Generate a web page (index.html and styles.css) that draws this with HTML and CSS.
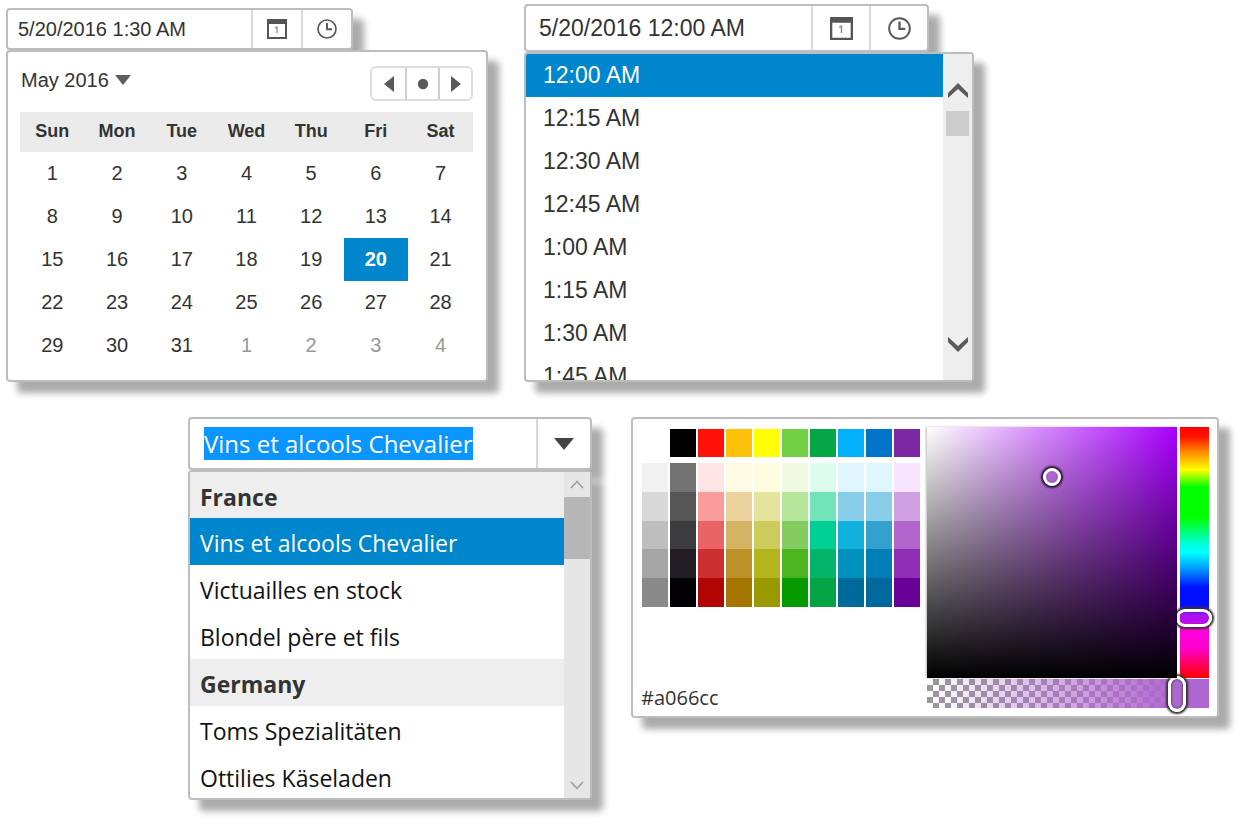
FILE: index.html
```html
<!DOCTYPE html>
<html lang="en">
<head>
<meta charset="utf-8">
<title>Input widgets</title>
<link rel="stylesheet" href="styles.css">
</head>
<body>
<main class="page">
  <div class="row">
    <section class="widget calendar-widget" aria-label="Date picker">
      <div class="field date-field">
        <input class="field-input" type="text" value="5/20/2016 1:30 AM" aria-label="Date and time">
        <button class="field-button" type="button" aria-label="Open calendar">
          <svg class="icon" viewBox="0 0 20 20"><path fill="#555" fill-rule="evenodd" d="M0 0h20v20H0zM2 5v13h16V5z"/><path d="M8 9l2-1v6" fill="none" stroke="#888" stroke-width="1.2"/></svg>
        </button>
        <button class="field-button" type="button" aria-label="Open time list">
          <svg class="icon" viewBox="0 0 20 20"><circle cx="10" cy="10" r="9" fill="none" stroke="#5a5a5a" stroke-width="1.7"/><path d="M10 4v6.300h5" fill="none" stroke="#5a5a5a" stroke-width="2"/></svg>
        </button>
      </div>
      <div class="popup calendar">
        <div class="calendar-bar">
          <button class="month" type="button">May 2016 <svg class="month-arrow" viewBox="0 0 16 10"><path d="M0 0h16L8 10z" fill="#5f5f5f"/></svg></button>
          <div class="pager">
            <button type="button" aria-label="Previous month"><svg viewBox="0 0 16 16"><path d="M13 0v16L3 8z"/></svg></button>
            <button type="button" aria-label="Today"><svg viewBox="0 0 16 16"><circle cx="8" cy="8" r="5.200"/></svg></button>
            <button type="button" aria-label="Next month"><svg viewBox="0 0 16 16"><path d="M3 0v16l10-8z"/></svg></button>
          </div>
        </div>
        <table class="days">
          <thead><tr><th>Sun</th><th>Mon</th><th>Tue</th><th>Wed</th><th>Thu</th><th>Fri</th><th>Sat</th></tr></thead>
          <tbody>
            <tr><td>1</td><td>2</td><td>3</td><td>4</td><td>5</td><td>6</td><td>7</td></tr>
            <tr><td>8</td><td>9</td><td>10</td><td>11</td><td>12</td><td>13</td><td>14</td></tr>
            <tr><td>15</td><td>16</td><td>17</td><td>18</td><td>19</td><td class="selected">20</td><td>21</td></tr>
            <tr><td>22</td><td>23</td><td>24</td><td>25</td><td>26</td><td>27</td><td>28</td></tr>
            <tr><td>29</td><td>30</td><td>31</td><td class="other">1</td><td class="other">2</td><td class="other">3</td><td class="other">4</td></tr>
          </tbody>
        </table>
      </div>
    </section>

    <section class="widget time-widget" aria-label="Time picker">
      <div class="field time-field">
        <input class="field-input" type="text" value="5/20/2016 12:00 AM" aria-label="Date and time">
        <button class="field-button" type="button" aria-label="Open calendar">
          <svg class="icon" viewBox="0 0 20 20"><path fill="#555" fill-rule="evenodd" d="M0 0h20v20H0zM2 5v13h16V5z"/><path d="M8 9l2-1v6" fill="none" stroke="#888" stroke-width="1.2"/></svg>
        </button>
        <button class="field-button" type="button" aria-label="Open time list">
          <svg class="icon" viewBox="0 0 20 20"><circle cx="10" cy="10" r="9" fill="none" stroke="#5a5a5a" stroke-width="1.7"/><path d="M10 4v6.300h5" fill="none" stroke="#5a5a5a" stroke-width="2"/></svg>
        </button>
      </div>
      <div class="popup list-popup times">
        <ul class="options" role="listbox" aria-label="Times">
          <li role="option" class="active" aria-selected="true">12:00 AM</li>
          <li role="option">12:15 AM</li>
          <li role="option">12:30 AM</li>
          <li role="option">12:45 AM</li>
          <li role="option">1:00 AM</li>
          <li role="option">1:15 AM</li>
          <li role="option">1:30 AM</li>
          <li role="option">1:45 AM</li>
        </ul>
        <div class="scrollbar">
          <button type="button" aria-label="Scroll up"><svg viewBox="0 0 20 16"><path d="M0 11v5L10 7l10 9v-5L10 1z"/></svg></button>
          <span class="thumb"></span>
          <button class="down" type="button" aria-label="Scroll down"><svg viewBox="0 0 20 16"><path d="M0 0v5l10 10 10-10V0L10 9z"/></svg></button>
        </div>
      </div>
    </section>
  </div>

  <div class="row lower">
    <section class="widget combo-widget" aria-label="Customer">
      <div class="field combo-field">
        <input class="field-input" id="customer" type="text" value="Vins et alcools Chevalier" aria-label="Customer" autofocus>
        <button class="field-button" type="button" aria-label="Open list">
          <svg class="combo-arrow" viewBox="0 0 20 12"><path d="M0 0h20L10 12z" fill="#444"/></svg>
        </button>
      </div>
      <div class="popup list-popup customers">
        <ul class="options" role="listbox" aria-label="Customers">
          <li class="group">France</li>
          <li role="option" class="active" aria-selected="true">Vins et alcools Chevalier</li>
          <li role="option">Victuailles en stock</li>
          <li role="option">Blondel père et fils</li>
          <li class="group">Germany</li>
          <li role="option">Toms Spezialitäten</li>
          <li role="option">Ottilies Käseladen</li>
        </ul>
        <div class="scrollbar thin">
          <button type="button" aria-label="Scroll up"><svg viewBox="0 0 14 9"><path d="M1 8l6-6.500L13 8"/></svg></button>
          <span class="thumb"></span>
          <button class="down" type="button" aria-label="Scroll down"><svg viewBox="0 0 14 9"><path d="M1 1l6 6.500L13 1"/></svg></button>
        </div>
      </div>
    </section>

    <section class="popup color-picker" aria-label="Color picker">
      <div class="palette">
        <div class="swatches base" id="base"></div>
        <div class="swatches shades" id="shades"></div>
        <input class="hex" type="text" value="#a066cc" aria-label="Color value">
      </div>
      <div class="mixer">
        <div class="plane"><span class="plane-handle"></span></div>
        <input class="hue" type="range" min="0" max="1000" value="781" aria-label="Hue">
        <input class="alpha" type="range" min="0" max="1000" value="913" aria-label="Opacity">
      </div>
    </section>
  </div>
</main>
<script src="script.js"></script>
</body>
</html>
```
FILE: styles.css
```css
* { box-sizing: border-box; }

body {
  margin: 0;
  background: #fff;
  color: #333;
  font-family: "Liberation Sans", Arial, sans-serif;
  font-size: 20px;
}

button, input {
  margin: 0;
  padding: 0;
  border: 0;
  background: none;
  color: inherit;
  font: inherit;
  outline: none;
}

.page {
  min-height: 100vh;
  padding: 4px 6px 24px;
}

.row {
  display: flex;
  align-items: flex-start;
  gap: 36px;
}

.lower {
  gap: 39px;
  margin-top: 35px;
  padding-left: 182px;
}

.calendar-widget { flex: 0 1 482px; margin-top: 4px; }
.time-widget { flex: 0 1 450px; }
.combo-widget { flex: 0 1 404px; font-family: "Open Sans", "Segoe UI", sans-serif; }

/* Fields */
.field {
  display: flex;
  border: 2px solid #bdbdbd;
  border-radius: 4px;
  background: #fff;
  box-shadow: 11px 11px 7px #ababab;
}

.field-input { flex: 1; min-width: 0; }

.field-button {
  display: flex;
  align-items: center;
  justify-content: center;
  border-left: 2px solid #d9d9d9;
}

.date-field { width: 72%; height: 42px; }
.date-field .field-input { padding-left: 10px; }
.date-field .field-button { width: 50px; }
.date-field .icon { width: 20px; height: 20px; }

.time-field { width: 90%; height: 48px; font-size: 23px; }
.time-field .field-input { padding-left: 13px; }
.time-field .field-button { width: 58px; }
.time-field .icon { width: 23px; height: 23px; }

.combo-field { height: 53px; font-size: 24px; }
.combo-field .field-input { padding-left: 14px; }
.combo-field .field-button { width: 54px; }
.combo-field .field-input::selection { background: #0a95ff; color: #fff; }
.combo-arrow { width: 20px; height: 12px; }

/* Popups */
.popup {
  position: relative;
  border: 2px solid #bdbdbd;
  border-radius: 4px;
  background: #fff;
  box-shadow: 11px 11px 7px #ababab;
}

/* Calendar */
.calendar { padding: 14px 13px 13px 12px; }

.calendar-bar {
  display: flex;
  justify-content: space-between;
  padding-bottom: 11px;
}

.month {
  display: flex;
  align-items: center;
  gap: 6px;
  height: 28px;
  padding-left: 1px;
}
.month-arrow { width: 16px; height: 10px; }

.pager {
  display: flex;
  border: 2px solid #dedede;
  border-radius: 6px;
}
.pager button {
  display: flex;
  align-items: center;
  justify-content: center;
  width: 33px;
  height: 31px;
}
.pager button + button { border-left: 2px solid #cfcfcf; }
.pager svg { width: 16px; height: 16px; fill: #5a5a5a; }

.days {
  width: 100%;
  border-collapse: collapse;
  table-layout: fixed;
  text-align: center;
}
.days th {
  height: 40px;
  padding: 0 0 2px;
  background: #ebebeb;
  font-size: 18px;
}
.days td { height: 43px; padding: 0; }
.days .selected { background: #0086cc; color: #fff; font-weight: bold; }
.days .other { color: #999; }

/* Lists */
.list-popup { display: flex; overflow: hidden; }

.options {
  flex: 1;
  margin: 0;
  padding: 0;
  list-style: none;
}
.options .active { background: #0086cc; color: #fff; }

.times { height: 330px; font-size: 23px; }
.times li { height: 43px; padding-left: 17px; line-height: 43px; }

.customers { height: 330px; color: #111; font-size: 23px; }
.customers li { height: 47px; padding-left: 10px; line-height: 50px; }
.customers .group { background: #eee; color: #333; font-weight: bold; }
.customers .group:first-child { height: 46px; }

.scrollbar {
  display: flex;
  flex-direction: column;
  width: 29px;
  padding: 28px 3px 27px 3px;
  background: #eee;
}
.scrollbar button {
  display: flex;
  align-items: center;
  justify-content: center;
  height: 16px;
}
.scrollbar svg { width: 20px; height: 16px; fill: #5a5a5a; }
.scrollbar .down { margin-top: auto; }
.scrollbar .thumb { height: 25px; margin-top: 13px; background: #ccc; }

.scrollbar.thin { width: 26px; padding: 0; background: #e6e6e6; }
.scrollbar.thin button { height: 25px; }
.scrollbar.thin svg { width: 14px; height: 9px; fill: none; stroke: #999; stroke-width: 1.5; }
.scrollbar.thin .thumb { height: 62px; margin-top: 0; background: #b6b6b6; }

/* Color picker */
.color-picker {
  display: flex;
  flex: 0 1 588px;
  gap: 7px;
  height: 301px;
  padding: 8px;
}

.palette {
  display: flex;
  flex: 1;
  flex-direction: column;
  padding-top: 2px;
}
.swatches {
  display: grid;
  grid-template-columns: repeat(10, 26px);
  column-gap: 2px;
  padding-left: 1px;
}
.base { height: 28px; }
.shades { height: 144px; margin-top: 6px; }

.hex {
  width: 120px;
  height: 22px;
  margin-top: auto;
  font-family: "Open Sans", "Segoe UI", sans-serif;
  font-size: 20px;
}

.mixer {
  display: grid;
  grid-template-columns: 250px 29px;
  grid-template-rows: 251px 29px;
  gap: 1px 3px;
}

.plane {
  position: relative;
  background: linear-gradient(to top, #000, transparent), linear-gradient(to right, #fff, #a800ff);
  box-shadow: -1px 0 2px #bbb;
}
.plane-handle {
  position: absolute;
  top: 20%;
  left: 50%;
  width: 18px;
  height: 18px;
  margin: -9px;
  border: 3px solid #fff;
  border-radius: 50%;
  box-shadow: 0 0 2px 2px #2b1733, inset 0 0 1px #5a2a70;
}

.hue, .alpha { appearance: none; }

.hue {
  width: 29px;
  height: 251px;
  writing-mode: vertical-lr;
  background: linear-gradient(#f00, #ff1400 4%, #ff8c00 10%, #ff0 17%, #0f0 24%, #0f0 36%, #00ffe0 47%, #0ff 50%, #0090ff 57%, #0010ff 64%, #0010ff 71%, #b010f0 75%, #b010f0 77%, #ff00e0 80%, #ff00d0 88%, #f06 94%, #f00);
}

.alpha {
  grid-column: 1 / 3;
  width: 100%;
  height: 29px;
  background:
    linear-gradient(to right, rgba(176, 102, 208, 0), #b066d0 88%),
    repeating-conic-gradient(#fff 0 25%, #999 0 50%) 0 0 / 12px 12px;
  background-position: 0 0, 6px 0;
}

.hue::-webkit-slider-thumb {
  appearance: none;
  width: 36px;
  height: 18px;
  margin-left: -2px;
  border: 3px solid #fff;
  border-radius: 9px;
  box-shadow: 0 0 2px 2px #333, inset 0 0 1px #333;
}

.alpha::-webkit-slider-thumb {
  appearance: none;
  width: 18px;
  height: 36px;
  border: 3px solid #fff;
  border-radius: 9px;
  box-shadow: 0 0 2px 2px #333, inset 0 0 2px 1px #555;
}
```
FILE: script.js
```js
const base = ["transparent", "#000000", "#ff1008", "#ffc20a", "#ffff00", "#72d044", "#04a646", "#00b0f8", "#0074c8", "#7c28a4"];

const shades = [
  ["#f2f2f2", "#727272", "#ffe4e6", "#fffae4", "#fffce0", "#f0fae0", "#dcfcee", "#e0f6ff", "#e0f6ff", "#f8e4ff"],
  ["#d8d8d8", "#565656", "#fa9c9c", "#ecd29c", "#e4e49c", "#b4e69c", "#72e4ba", "#88cee8", "#88cee8", "#d0a0e4"],
  ["#bebebe", "#3c3c3e", "#e86466", "#d4b464", "#cccc5c", "#84cc60", "#00d094", "#10b2dc", "#34a0d0", "#b064cc"],
  ["#a6a6a8", "#241e24", "#cc3030", "#bc9228", "#b4b41c", "#4cb41c", "#04b46a", "#0092bc", "#007eb8", "#8e2eb4"],
  ["#8a8a8a", "#020004", "#b20606", "#a47600", "#9a9a00", "#049a00", "#04a444", "#006a9c", "#00689c", "#680098"]
];

function fill(id, colors) {
  const box = document.getElementById(id);
  for (const color of colors) {
    const swatch = document.createElement("button");
    swatch.type = "button";
    swatch.style.background = color;
    swatch.setAttribute("aria-label", color);
    box.append(swatch);
  }
}

fill("base", base);
fill("shades", shades.flat());

const customer = document.getElementById("customer");
customer.focus();
customer.select();
```
